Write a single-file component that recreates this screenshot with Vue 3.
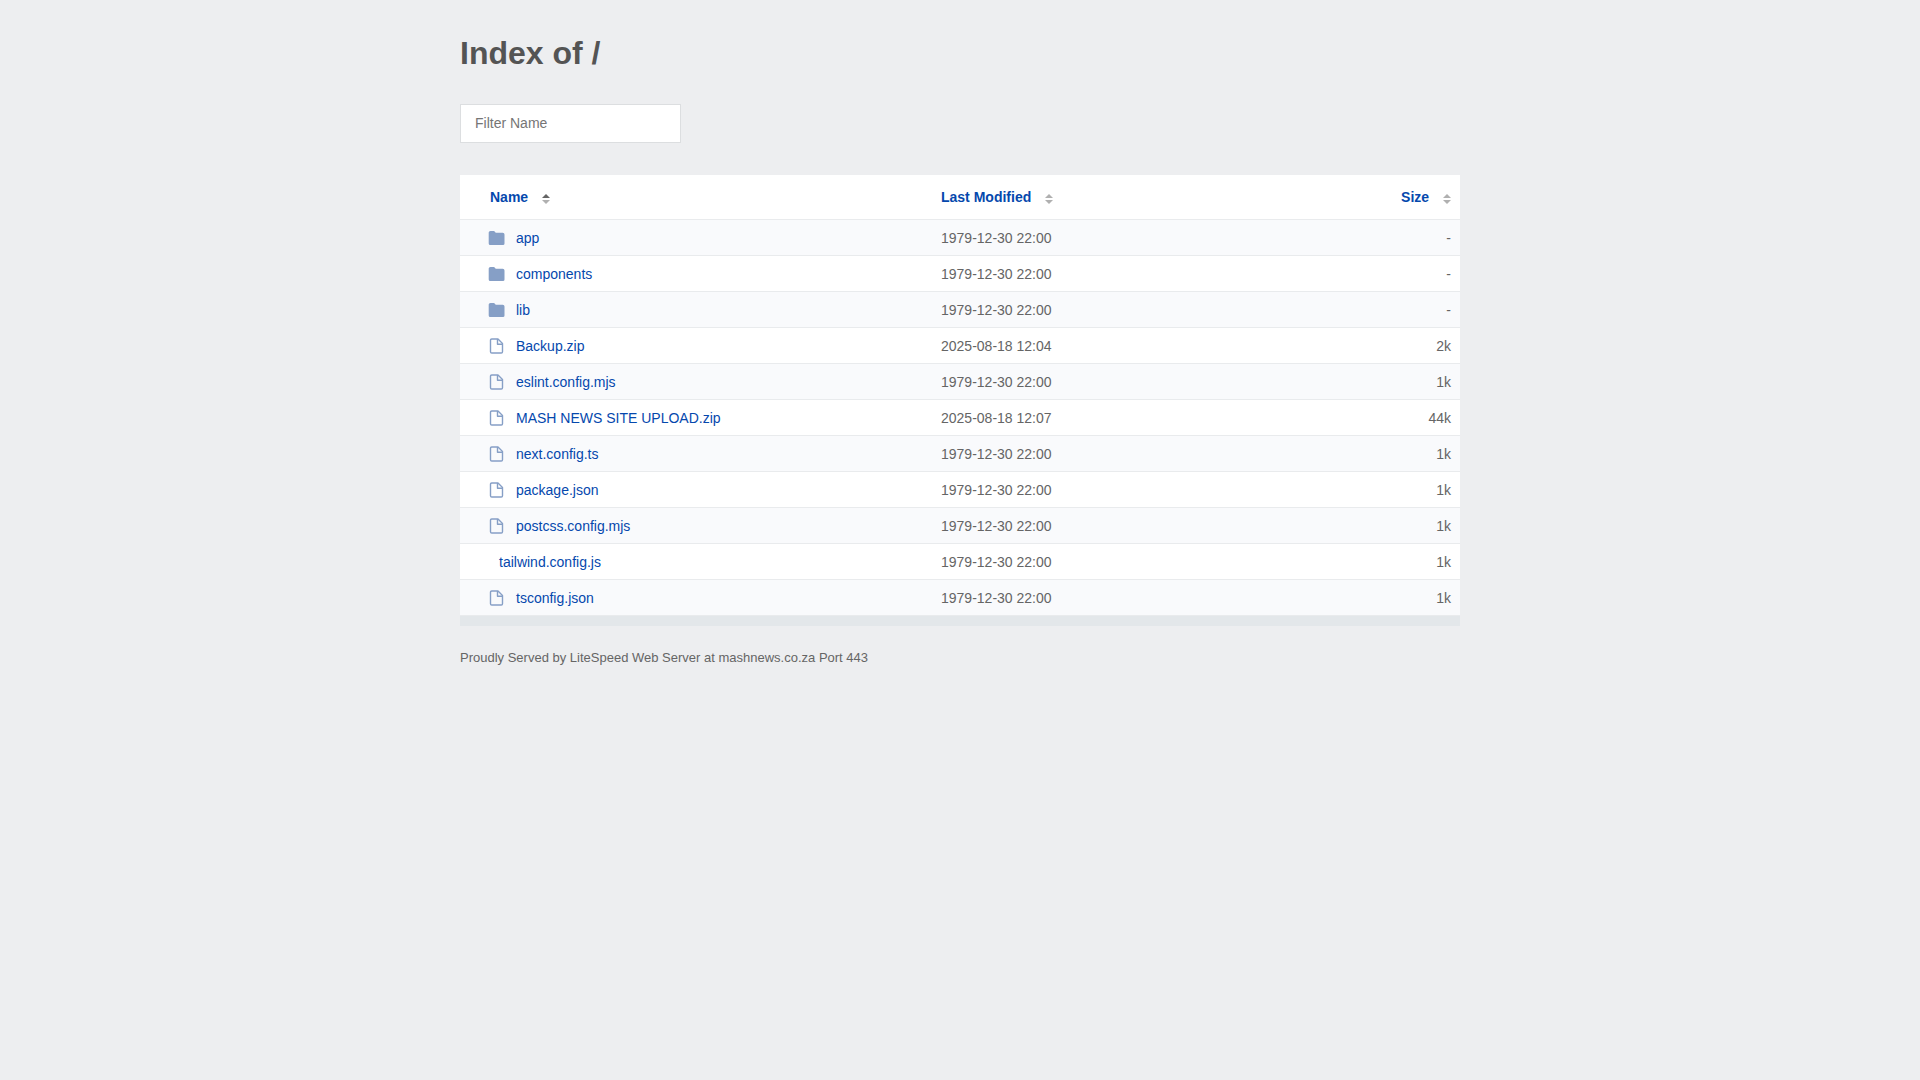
<script setup>
import { computed, ref } from 'vue'

const filter = ref('')
const sortKey = ref('name')
const ascending = ref(true)

const old = '1979-12-30 22:00'
const entries = [
  { name: 'app', kind: 'folder', modified: old, size: '-' },
  { name: 'components', kind: 'folder', modified: old, size: '-' },
  { name: 'lib', kind: 'folder', modified: old, size: '-' },
  { name: 'Backup.zip', kind: 'file', modified: '2025-08-18 12:04', size: '2k' },
  { name: 'eslint.config.mjs', kind: 'file', modified: old, size: '1k' },
  { name: 'MASH NEWS SITE UPLOAD.zip', kind: 'file', modified: '2025-08-18 12:07', size: '44k' },
  { name: 'next.config.ts', kind: 'file', modified: old, size: '1k' },
  { name: 'package.json', kind: 'file', modified: old, size: '1k' },
  { name: 'postcss.config.mjs', kind: 'file', modified: old, size: '1k' },
  { name: 'tailwind.config.js', kind: 'none', modified: old, size: '1k' },
  { name: 'tsconfig.json', kind: 'file', modified: old, size: '1k' },
]
const columns = [
  { key: 'name', label: 'Name' },
  { key: 'modified', label: 'Last Modified' },
  { key: 'size', label: 'Size' },
]

function sortBy(key) {
  ascending.value = sortKey.value === key ? !ascending.value : true
  sortKey.value = key
}

function compare(a, b) {
  if (sortKey.value === 'size') return (parseInt(a.size) || 0) - (parseInt(b.size) || 0)
  return a[sortKey.value].toLowerCase().localeCompare(b[sortKey.value].toLowerCase())
}

const rows = computed(() => {
  const term = filter.value.toLowerCase()
  const direction = ascending.value ? 1 : -1
  return entries
    .filter((e) => e.name.toLowerCase().includes(term))
    .sort((a, b) => (b.kind === 'folder') - (a.kind === 'folder') || direction * compare(a, b))
})
</script>

<template>
  <main class="content">
    <h1>Index of /</h1>
    <input v-model="filter" class="filter" type="text" placeholder="Filter Name" aria-label="Filter Name" />
    <table>
      <thead>
        <tr>
          <th v-for="col in columns" :key="col.key" :class="col.key" scope="col">
            <button type="button" @click="sortBy(col.key)">
              {{ col.label }}
              <svg class="sort" width="8" height="10" viewBox="0 0 8 10" aria-hidden="true">
                <path :class="{ on: sortKey === col.key && ascending }" d="M0 4 4 0l4 4z" />
                <path :class="{ on: sortKey === col.key && !ascending }" d="M0 6h8l-4 4z" />
              </svg>
            </button>
          </th>
        </tr>
      </thead>
      <tbody>
        <tr v-for="row in rows" :key="row.name">
          <td class="name">
            <a href="#" :class="{ plain: row.kind === 'none' }">
              <svg v-if="row.kind === 'folder'" width="18" height="16" viewBox="0 0 18 16" aria-hidden="true">
                <path fill="#869fc6" d="M2.500 1h3.200q.6 0 1 .5l1 1.200h7q1.800 0 1.800 1.800v9q0 1.500-1.500 1.500H2.200q-1.500 0-1.500-1.500v-11Q.7 1 2.500 1z" />
              </svg>
              <svg v-else-if="row.kind === 'file'" width="18" height="16" viewBox="0 0 18 16" aria-hidden="true">
                <g fill="none" stroke="#869fc6" stroke-width="1.400" stroke-linejoin="round">
                  <path d="M3.800 1h6.200l4.500 4.500v8.200q0 1.300-1.300 1.300H3.800q-1.300 0-1.300-1.300V2.300Q2.500 1 3.800 1z" />
                  <path d="M9.500 1v5.200h5" />
                </g>
              </svg>
              <span>{{ row.name }}</span>
            </a>
          </td>
          <td class="modified">{{ row.modified }}</td>
          <td class="size">{{ row.size }}</td>
        </tr>
      </tbody>
    </table>
    <footer>Proudly Served by LiteSpeed Web Server at mashnews.co.za Port 443</footer>
  </main>
</template>

<style>
body {
  margin: 0;
  background: #edeef0;
}
</style>

<style scoped>
.content {
  box-sizing: border-box;
  width: 100%;
  max-width: 1040px;
  margin: 0 auto;
  padding: 32px 20px;
  color: #545454;
  font-family: "Liberation Sans", Arial, sans-serif;
  font-size: 14px;
}
h1 {
  margin: 0 0 30px;
  font-size: 32px;
  line-height: 42px;
}
.filter {
  display: block;
  box-sizing: border-box;
  width: 221px;
  height: 39px;
  margin: 0 0 32px;
  padding: 0 14px 2px;
  border: 1px solid #dcdee0;
  border-radius: 0;
  background: #fff;
  color: #545454;
  font: inherit;
  outline: none;
}
.filter::placeholder {
  color: #757575;
  opacity: 1;
}
table {
  width: 100%;
  border-collapse: separate;
  border-spacing: 0;
  table-layout: fixed;
  border-bottom: 10px solid #e3e7ea;
  background: #fff;
}
th,
td {
  height: 35px;
  padding: 0 9px 0 0;
  border-bottom: 1px solid #e9ebed;
  text-align: left;
  vertical-align: middle;
}
th {
  height: 44px;
}
td {
  color: #656565;
}
.name {
  width: 444px;
  padding-left: 28px;
}
th.name {
  padding-left: 30px;
  width: 442px;
}
.size {
  text-align: right;
}
tbody tr:nth-child(odd) {
  background: #f9fafc;
}
th button {
  padding: 0;
  border: 0;
  background: none;
  color: #0548ad;
  font: inherit;
  font-weight: bold;
  cursor: pointer;
}
.sort {
  margin-left: 10px;
  vertical-align: -2px;
  fill: #b0b0b0;
}
.sort .on {
  fill: #656565;
}
a {
  display: flex;
  align-items: center;
  gap: 10px;
  color: #0548ad;
  text-decoration: none;
}
.plain {
  padding-left: 11px;
}
footer {
  padding-top: 24px;
  color: #656565;
  font-size: 13px;
  line-height: 16px;
}
</style>
